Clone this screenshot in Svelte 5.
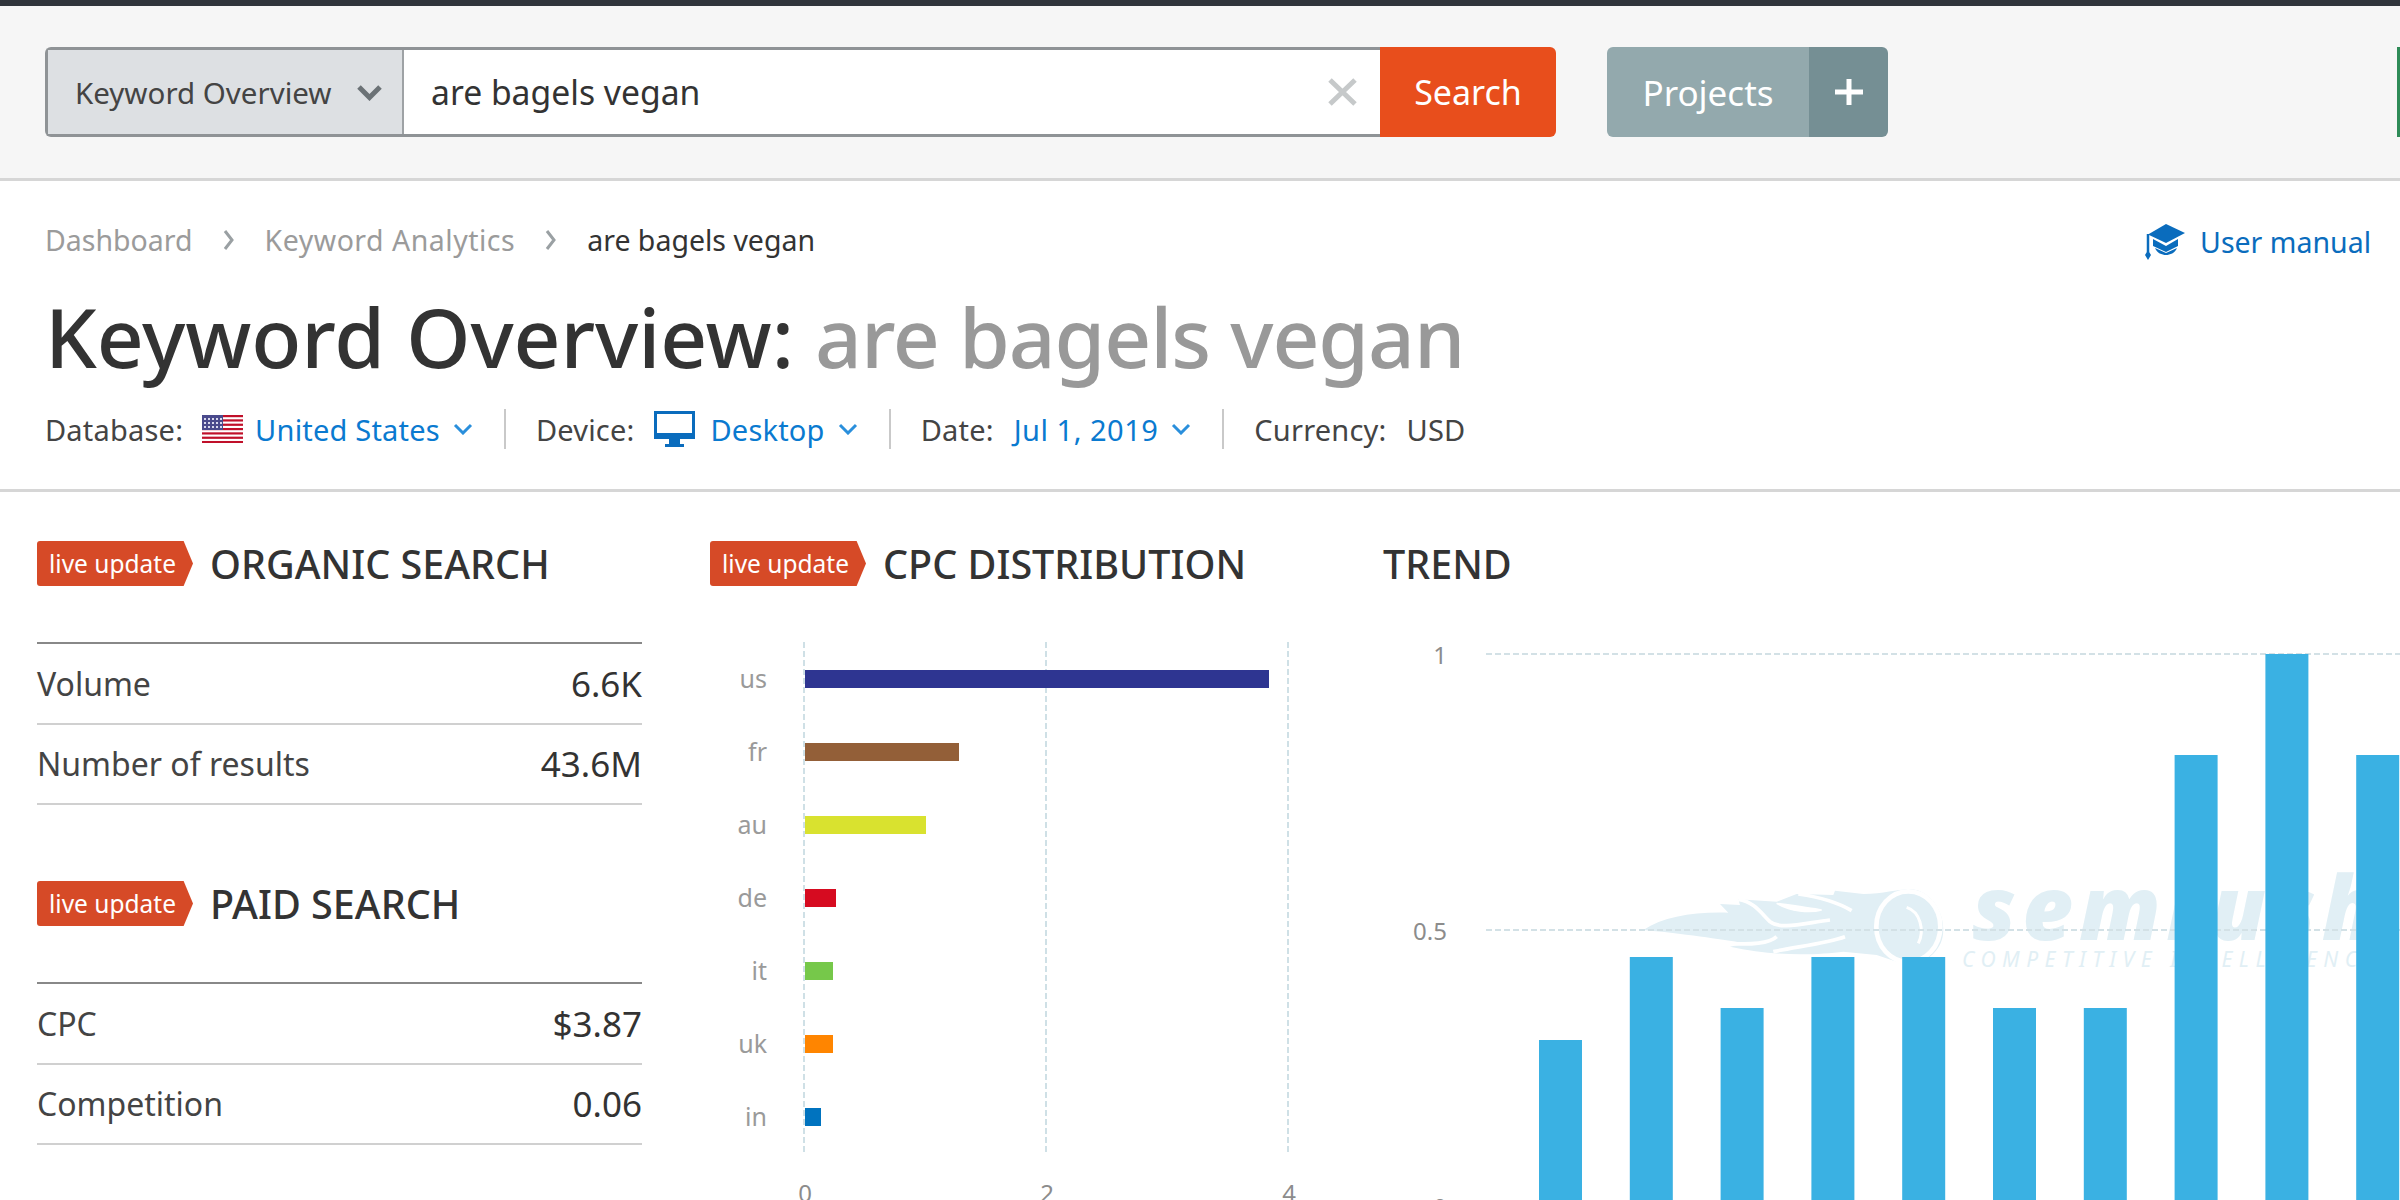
<script>
  const cpc = [
    { code: "us", end: 1269, color: "#2e3591" },
    { code: "fr", end: 959, color: "#935f38" },
    { code: "au", end: 926, color: "#d9e22f" },
    { code: "de", end: 836, color: "#d60b20" },
    { code: "it", end: 833, color: "#76c84a" },
    { code: "uk", end: 833, color: "#ff8500" },
    { code: "in", end: 821, color: "#0073bf" }
  ];
  const trend = [1040, 957, 1008, 957, 957, 1008, 1008, 755, 654, 755];
  const stripes = [0, 1, 2, 3, 4, 5, 6];
  const stars = [2, 6, 10, 14, 18];
</script>

<div class="topbar"></div>

<header class="searchbar">
  <div class="searchbox">
    <div class="select">
      <span>Keyword Overview</span>
      <svg width="27" height="17" viewBox="0 0 27 17"><path d="M3 3l10.500 10.500L24 3" fill="none" stroke="#6b7276" stroke-width="5" /></svg>
    </div>
    <div class="input">
      <span>are bagels vegan</span>
      <svg width="31" height="28" viewBox="0 0 31 28"><path d="M3 2l25 24M28 2L3 26" stroke="#c6c9ca" stroke-width="5" fill="none" /></svg>
    </div>
  </div>
  <button class="search">Search</button>
  <div class="projects">
    <span class="plabel">Projects</span>
    <span class="padd"><svg width="28" height="26" viewBox="0 0 28 26"><path d="M14 0v26M0 13h28" stroke="#fff" stroke-width="5" /></svg></span>
  </div>
  <div class="edge"></div>
</header>

<section class="pagehead">
  <div class="crumbrow">
    <nav class="crumbs">
      <span>Dashboard</span>
      <svg width="12" height="22" viewBox="0 0 12 22"><path d="M2 2l7 9-7 9" fill="none" stroke="#9aa0a3" stroke-width="3" /></svg>
      <span class="middle">Keyword Analytics</span>
      <svg width="12" height="22" viewBox="0 0 12 22"><path d="M2 2l7 9-7 9" fill="none" stroke="#9aa0a3" stroke-width="3" /></svg>
      <span class="current">are bagels vegan</span>
    </nav>
    <div class="manual">
      <svg width="40" height="36" viewBox="0 0 40 36">
        <path d="M21 0L40 9 21 19 3 10.500z" fill="#0a6cbd" />
        <path d="M8 15l13 7 12-7v7l-12 6-13-6z" fill="#0a6cbd" />
        <path d="M10 24l11 5 11-5c-2 5-7 7-11 7s-9-2-11-7z" fill="#0a6cbd" />
        <path d="M3 10v18" stroke="#0a6cbd" stroke-width="2.500" />
        <path d="M3 26l3 5-3 5-3-5z" fill="#0a6cbd" />
      </svg>
      <span>User manual</span>
    </div>
  </div>
  <h1>Keyword Overview: <span>are bagels vegan</span></h1>
  <div class="meta">
    <span class="label">Database:</span>
    <svg class="flag" width="41" height="28" viewBox="0 0 41 28">
      <rect width="41" height="28" fill="#fff" />
      {#each stripes as s}
        <rect y={s * 4.330} width="41" height="2.200" fill="#c0102a" />
      {/each}
      <rect width="21" height="15" fill="#4a4a8c" />
      {#each stars as x}
        <rect x={x} y="3" width="2" height="2" fill="#d8d8ec" />
        <rect x={x} y="7" width="2" height="2" fill="#d8d8ec" />
        <rect x={x} y="11" width="2" height="2" fill="#d8d8ec" />
      {/each}
    </svg>
    <span class="link">United States</span>
    <svg class="chev" width="20" height="12" viewBox="0 0 20 12"><path d="M2 2l8 8 8-8" fill="none" stroke="#2a8fdc" stroke-width="3" /></svg>
    <i class="sep"></i>
    <span class="label">Device:</span>
    <svg class="monitor" width="41" height="36" viewBox="0 0 41 36">
      <path fill-rule="evenodd" d="M0 0h41v28H0zM3 3v19h35V3z" fill="#0a6cbd" />
      <path d="M15 28h11v5h4v3H11v-3h4z" fill="#0a6cbd" />
    </svg>
    <span class="link">Desktop</span>
    <svg class="chev" width="20" height="12" viewBox="0 0 20 12"><path d="M2 2l8 8 8-8" fill="none" stroke="#2a8fdc" stroke-width="3" /></svg>
    <i class="sep"></i>
    <span class="label">Date:</span>
    <span class="link date">Jul 1, 2019</span>
    <svg class="chev" width="20" height="12" viewBox="0 0 20 12"><path d="M2 2l8 8 8-8" fill="none" stroke="#2a8fdc" stroke-width="3" /></svg>
    <i class="sep"></i>
    <span class="label">Currency:</span>
    <span class="label usd">USD</span>
  </div>
</section>

<main class="columns">
  <div class="col">
    <div class="widgethead"><span class="badge">live update</span><h2>ORGANIC SEARCH</h2></div>
    <div class="table">
      <div class="row"><span>Volume</span><b>6.6K</b></div>
      <div class="row"><span>Number of results</span><b>43.6M</b></div>
    </div>
    <div class="widgethead paid"><span class="badge">live update</span><h2>PAID SEARCH</h2></div>
    <div class="table">
      <div class="row"><span>CPC</span><b>$3.87</b></div>
      <div class="row"><span>Competition</span><b>0.06</b></div>
    </div>
  </div>

  <div class="col">
    <div class="widgethead"><span class="badge">live update</span><h2>CPC DISTRIBUTION</h2></div>
    <svg class="chart" width="673" height="570" viewBox="710 630 673 570">
      {#each [804, 1046, 1288] as x, i}
        <line x1={x} x2={x} y1="642" y2="1154" stroke="#cfe0e6" stroke-width="2" stroke-dasharray="6 3" />
        <text x={x + 1} y="1202" text-anchor="middle" class="tick">{i * 2}</text>
      {/each}
      {#each cpc as c, i}
        <rect x="805" y={670 + i * 73} width={c.end - 805} height="18" fill={c.color} />
        <text x="767" y={688 + i * 73} text-anchor="end" class="cat">{c.code}</text>
      {/each}
    </svg>
  </div>

  <div class="col wide">
    <div class="widgethead"><h2>TREND</h2></div>
    <svg class="chart" width="1017" height="570" viewBox="1383 630 1017 570">
      <g class="mark" fill="#e1eff5">
        <!-- watermark logo, coordinates are 3x -->
        <g transform="translate(1630 880) scale(0.3333)">
          <path d="M40 150C100 110 190 95 295 98L270 72L330 75L325 58L440 65L500 42L610 45L615 32L700 42C760 42 800 28 840 28C900 30 940 90 940 150C940 210 890 250 840 250L800 245L740 225L640 215C560 225 430 230 300 200L350 190C280 180 200 165 40 150Z" />
          <g fill="none" stroke="#fff" stroke-width="11">
            <path d="M325 58C370 65 390 95 420 125C450 150 520 130 600 120" />
            <path d="M440 70C500 78 550 85 575 90C540 100 480 95 440 70Z" fill="#fff" stroke-width="4" />
            <path d="M505 42C560 50 620 65 665 92" />
            <path d="M300 190C360 195 420 190 440 170" />
            <path d="M430 215C500 200 590 190 645 170" />
            <ellipse cx="835" cy="140" rx="96" ry="106" stroke-width="14" />
            <path d="M830 82C870 95 885 150 865 190" stroke-width="9" />
          </g>
        </g>
        <text x="1972" y="940" class="brand">semrush</text>
        <text x="1962" y="967" class="tag">COMPETITIVE INTELLIGENCE</text>
      </g>
      {#each [654, 930, 1206] as y, i}
        <line x1="1486" x2="2400" y1={y} y2={y} stroke="#d3e1e6" stroke-width="2" stroke-dasharray="6 3" />
        <text x="1447" y={y + 10} text-anchor="end" class="tick">{["1", "0.5", "0"][i]}</text>
      {/each}
      {#each trend as top, i}
        <rect x={1539 + i * 90.800} y={top} width="43" height={1210 - top} fill="#3ab1e3" />
      {/each}
    </svg>
  </div>
</main>

<style>
  :global(body) {
    margin: 0;
    height: 1200px;
    overflow: hidden;
    background: #fff;
    font-family: "Noto Sans", "Open Sans", sans-serif;
    color: #333;
  }
  .topbar {
    height: 6px;
    background: #30353b;
  }
  .searchbar {
    display: flex;
    align-items: stretch;
    height: 175px;
    padding: 41px 0 41px 45px;
    box-sizing: border-box;
    background: #f6f6f6;
    border-bottom: 3px solid #d6d6d6;
  }
  .searchbox {
    display: flex;
    width: 1335px;
    border: 3px solid #8f9396;
    border-right: 0;
    border-radius: 6px 0 0 6px;
    box-sizing: border-box;
  }
  .select {
    width: 356px;
    display: flex;
    align-items: center;
    justify-content: space-between;
    padding: 0 19px 0 27px;
    box-sizing: border-box;
    background: #dde0e3;
    border-right: 2px solid #9ea2a5;
    font-size: 29.500px;
    color: #444;
    white-space: nowrap;
  }
  .input {
    flex: 1;
    display: flex;
    align-items: center;
    justify-content: space-between;
    padding: 0 22px 0 27px;
    background: #fff;
    font-size: 33.700px;
    color: #333;
  }
  .search {
    width: 176px;
    border: 0;
    border-radius: 0 6px 6px 0;
    background: #e84e1c;
    color: #fff;
    font: inherit;
    font-size: 34px;
  }
  .projects {
    display: flex;
    margin-left: 51px;
    width: 281px;
    border-radius: 6px;
    overflow: hidden;
    color: #fff;
    font-size: 35px;
  }
  .plabel {
    width: 202px;
    display: flex;
    align-items: center;
    justify-content: center;
    background: #93a9ad;
  }
  .padd {
    flex: 1;
    display: flex;
    align-items: center;
    justify-content: center;
    background: #758f94;
  }
  .edge {
    margin-left: auto;
    width: 3px;
    background: #2e8b57;
  }
  .pagehead {
    height: 311px;
    padding: 0 29px 0 45px;
    border-bottom: 3px solid #d6d6d6;
    box-sizing: border-box;
  }
  .crumbrow {
    display: flex;
    justify-content: space-between;
    align-items: center;
    padding-top: 40px;
    height: 44px;
  }
  .crumbs {
    display: flex;
    align-items: center;
    gap: 30px;
    margin-top: -6px;
    font-size: 28.500px;
    color: #9b9b9b;
  }
  .middle {
    letter-spacing: 0.500px;
  }
  .current {
    color: #333;
  }
  .manual {
    display: flex;
    align-items: center;
    gap: 15px;
    margin-top: -2px;
    font-size: 28.500px;
    color: #0a6cbd;
  }
  h1 {
    margin: 21px 0 0;
    font-size: 82px;
    line-height: 100px;
    font-weight: 500;
    letter-spacing: -0.100px;
    color: #333;
    white-space: nowrap;
  }
  h1 span {
    letter-spacing: -1.100px;
    color: #999;
  }
  .meta {
    display: flex;
    align-items: center;
    height: 40px;
    margin-top: 23px;
    font-size: 29px;
    letter-spacing: 0.2px;
    color: #444;
    white-space: nowrap;
  }
  .link {
    color: #0a7ad0;
  }
  .date {
    margin-left: 20px;
    letter-spacing: 0.500px;
  }
  .flag {
    margin: 0 12px 0 19px;
  }
  .monitor {
    margin: 0 16px 0 19px;
  }
  .chev {
    margin-left: 13px;
  }
  .sep {
    width: 2px;
    height: 40px;
    margin: 0 30px 0 31px;
    background: #c9c9c9;
  }
  .usd {
    margin-left: 20px;
  }
  .columns {
    display: grid;
    grid-template-columns: 673px 673px 1fr;
    padding-left: 37px;
  }
  .col {
    min-width: 0;
  }
  .widgethead {
    display: flex;
    align-items: center;
    gap: 17px;
    height: 45px;
    margin-top: 49px;
  }
  .widgethead.paid {
    margin-top: 76px;
  }
  .badge {
    width: 156px;
    height: 45px;
    box-sizing: border-box;
    padding-left: 12px;
    display: flex;
    align-items: center;
    background: #d64a27;
    color: #fff;
    font-size: 24.500px;
    border-radius: 3px;
    white-space: nowrap;
    clip-path: polygon(0 0, 94% 0, 100% 50%, 94% 100%, 0 100%);
  }
  h2 {
    margin: 0;
    font-size: 39.500px;
    font-weight: 500;
    color: #333;
    white-space: nowrap;
  }
  .table {
    width: 605px;
    margin-top: 56px;
    border-top: 2px solid #888;
  }
  .row {
    display: flex;
    justify-content: space-between;
    align-items: center;
    height: 80.500px;
    box-sizing: border-box;
    border-bottom: 2px solid #d0d0d0;
    font-size: 32px;
    color: #444;
  }
  .row b {
    font-size: 35px;
    font-weight: 400;
    color: #333;
  }
  .chart {
    display: block;
    margin-top: 44px;
  }
  .tick {
    font-size: 24px;
    fill: #8c8c8c;
  }
  .cat {
    font-size: 25px;
    fill: #9a9a9a;
  }
  .brand {
    font-size: 88px;
    font-weight: 900;
    font-style: italic;
    letter-spacing: 6px;
  }
  .tag {
    font-size: 21px;
    font-style: italic;
    letter-spacing: 6.500px;
  }
</style>
